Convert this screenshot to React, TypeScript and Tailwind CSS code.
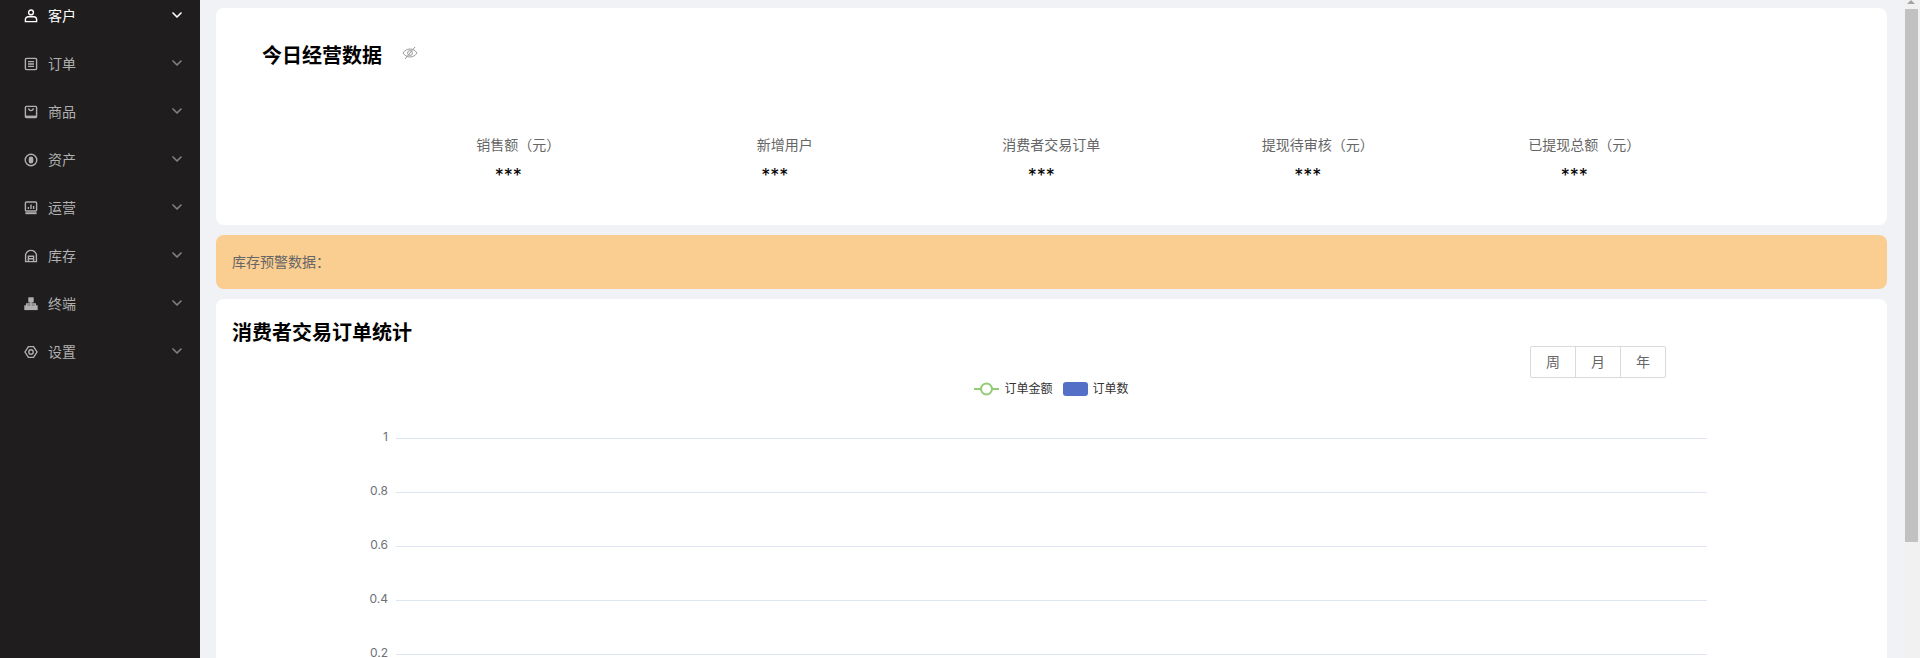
import { ChevronDown } from 'lucide-react';
import type { ReactNode } from 'react';

const FONT = "font-['Inter','Noto_Sans_CJK_SC',sans-serif]";

const icons: Record<string, ReactNode> = {
  user: (
    <>
      <circle cx="7" cy="3.4" r="2.4" />
      <path d="M1.4 12.6h11.2v-2c0-1.6-1.2-2.8-2.8-2.8H4.2c-1.6 0-2.8 1.2-2.8 2.8z" />
    </>
  ),
  order: (
    <>
      <rect x="1.4" y="1.4" width="11.2" height="11.2" rx="1" />
      <path d="M4 4.6h6M4 7h6M4 9.4h6" />
    </>
  ),
  goods: (
    <>
      <rect x="1.4" y="1.4" width="11.2" height="11.2" rx="1" />
      <path d="M4.6 3.4c.3 1.6 1.2 2.2 2.4 2.2s2.1-.6 2.4-2.2" />
      <path d="M1.6 11.6h10.8" strokeWidth="2" />
    </>
  ),
  asset: (
    <>
      <circle cx="7" cy="7" r="5.8" />
      <rect x="5.4" y="4.2" width="3.2" height="5.6" rx="1.6" fill="currentColor" />
    </>
  ),
  ops: (
    <>
      <rect x="1.4" y="1" width="11.2" height="9" rx="1" />
      <path d="M4.4 8V6M7 8V3.4M9.6 8V5" />
      <path d="M1.4 12.2h11.2" strokeWidth="2" />
    </>
  ),
  stock: (
    <>
      <path d="M1.6 12.6V5.4C2.6 3 4.6 1.4 7 1.4s4.4 1.6 5.4 4v7.2z" />
      <path d="M4.4 12.6V7.2h5.2v5.4M4.4 9.8h5.2" />
    </>
  ),
  terminal: (
    <>
      <rect x="5" y="1" width="4" height="3.8" fill="currentColor" />
      <rect x="1" y="9" width="3.4" height="3.4" fill="currentColor" />
      <rect x="5.3" y="9" width="3.4" height="3.4" fill="currentColor" />
      <rect x="9.6" y="9" width="3.4" height="3.4" fill="currentColor" />
      <path d="M7 5v4M2.7 9V7h8.6v2" />
    </>
  ),
  settings: (
    <>
      <path d="M4.4 1.6h5.2L13 7l-3.4 5.4H4.4L1 7z" />
      <circle cx="7" cy="7" r="2.2" />
    </>
  ),
};

const menu = [
  { key: 'user', label: '客户', active: true },
  { key: 'order', label: '订单' },
  { key: 'goods', label: '商品' },
  { key: 'asset', label: '资产' },
  { key: 'ops', label: '运营' },
  { key: 'stock', label: '库存' },
  { key: 'terminal', label: '终端' },
  { key: 'settings', label: '设置' },
];

const stats = ['销售额（元）', '新增用户', '消费者交易订单', '提现待审核（元）', '已提现总额（元）'];

const ticks = [
  { label: '1', y: 438 },
  { label: '0.8', y: 492 },
  { label: '0.6', y: 546 },
  { label: '0.4', y: 600 },
  { label: '0.2', y: 654 },
];

function Sidebar() {
  return (
    <aside className="w-[200px] shrink-0 bg-[#1f1d1e]">
      <ul className="-mt-[8px] flex flex-col">
        {menu.map((item) => (
          <li
            key={item.key}
            className={`flex h-12 items-center pl-[24px] pr-[15px] text-sm ${
              item.active ? 'text-white' : 'text-[#b0b0b0]'
            }`}
          >
            <svg
              viewBox="0 0 14 14"
              className="h-[14px] w-[14px]"
              fill="none"
              stroke="currentColor"
              strokeWidth="1.4"
            >
              {icons[item.key]}
            </svg>
            <span className="ml-[10px] flex-1">{item.label}</span>
            <ChevronDown
              size={16}
              strokeWidth={2.5}
              className={`-mt-[2px] ${item.active ? 'text-white' : 'text-[#808080]'}`}
            />
          </li>
        ))}
      </ul>
    </aside>
  );
}

function TodayCard() {
  return (
    <section className="h-[217px] shrink-0 rounded-lg bg-white">
      <div className="flex items-center pl-[46px] pt-[34px]">
        <h2 className="text-xl leading-[28px] font-bold text-black">今日经营数据</h2>
        <svg
          viewBox="0 0 16 14"
          className="ml-[20px] -mt-[6px] h-[14px] w-[16px] text-[#9a9a9a]"
          fill="none"
          stroke="currentColor"
          strokeWidth="1"
        >
          <path d="M1 7c1.8-2.6 4-4 7-4s5.2 1.4 7 4c-1.8 2.6-4 4-7 4s-5.2-1.4-7-4z" />
          <circle cx="8" cy="7" r="2.4" />
          <path d="M3 13L13 1" />
        </svg>
      </div>
      <div className="mt-[65px] flex pl-[159px]">
        {stats.map((label) => (
          <div key={label} className="flex w-[266.5px] flex-col items-center">
            <span className="pl-[20px] text-sm leading-5 text-[#666]">{label}</span>
            <span className="mt-[9px] text-lg leading-6 text-black">***</span>
          </div>
        ))}
      </div>
    </section>
  );
}

function OrderChart() {
  return (
    <section className="relative h-[400px] shrink-0 rounded-lg bg-white px-4 pt-[20px]">
      <h2 className="text-xl leading-[28px] font-bold text-black">消费者交易订单统计</h2>
      <div className="absolute left-[1314px] top-[47px] flex h-8 w-[136px] rounded-[2px] border border-[#d9d9d9] text-sm text-[#666]">
        <button className="flex-1">周</button>
        <button className="flex-1 border-x border-[#d9d9d9]">月</button>
        <button className="flex-1">年</button>
      </div>
      <div className="mt-[34px] flex items-center justify-center text-xs text-[#333]">
        <svg viewBox="0 0 25 14" className="h-[14px] w-[25px]" fill="none">
          <path d="M0 7h25" stroke="#91cc75" strokeWidth="2" />
          <circle cx="12.5" cy="7" r="5.5" fill="#fff" stroke="#91cc75" strokeWidth="2" />
        </svg>
        <span className="ml-[5px]">订单金额</span>
        <span className="ml-[10px] h-[14px] w-[25px] rounded-[3px] bg-[#5470c6]" />
        <span className="ml-[5px]">订单数</span>
      </div>
      <svg className="absolute left-0 top-[-299px] h-[658px] w-[1671px]" viewBox="216 0 1671 658">
        {ticks.map((t) => (
          <g key={t.label}>
            <line x1="396" x2="1707" y1={t.y + 0.5} y2={t.y + 0.5} stroke="#e0e6f1" />
            <text x="388" y={t.y + 3} textAnchor="end" fontSize="12" fill="#6e7079">
              {t.label}
            </text>
          </g>
        ))}
      </svg>
    </section>
  );
}

function Scrollbar() {
  return (
    <div className="relative w-[17px] shrink-0 bg-[#f1f1f1]">
      <div className="mx-auto mt-[9px] h-[533px] w-[13px] bg-[#c1c1c1]" />
      <span className="absolute left-[4px] top-0 h-0 w-0 border-x-[4px] border-b-[4px] border-x-transparent border-b-[#a3a3a3]" />
    </div>
  );
}

export default function App() {
  return (
    <div className={`flex h-[658px] overflow-hidden ${FONT}`}>
      <Sidebar />
      <main className="flex min-w-0 flex-1 flex-col gap-[10px] overflow-hidden bg-[#f0f2f5] pl-4 pr-4 pt-2">
        <TodayCard />
        <section className="flex h-[54px] shrink-0 items-center rounded-lg bg-[#facd91] px-4 text-sm text-[#666]">
          库存预警数据：
        </section>
        <OrderChart />
      </main>
      <Scrollbar />
    </div>
  );
}
